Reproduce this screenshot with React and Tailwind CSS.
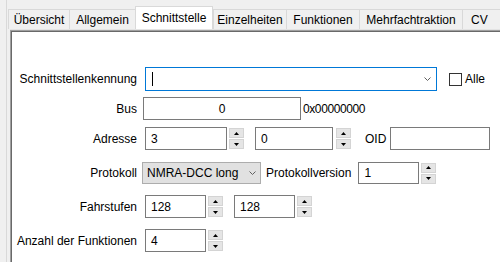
import React from "react";

const font = { fontFamily: '"Liberation Sans", Arial, sans-serif' };

function Chevron() {
  return (
    <svg width="7" height="4" viewBox="0 0 7 4" className="block">
      <polyline points="0.5,0.5 3.5,3.5 6.5,0.5" fill="none" stroke="#606060" strokeWidth="1" />
    </svg>
  );
}

function Spin({ ml = "ml-[2px]" }) {
  return (
    <div className={`flex flex-col gap-[1px] w-[15px] ${ml} shrink-0`}>
      <div className="h-[10px] bg-[#e5e5e5] border border-[#d4d4d4] flex items-center justify-center">
        <svg width="5" height="3" viewBox="0 0 5 3" className="block">
          <polygon points="0,3 5,3 2.5,0" fill="#000" />
        </svg>
      </div>
      <div className="h-[10px] bg-[#e5e5e5] border border-[#d4d4d4] flex items-center justify-center">
        <svg width="5" height="3" viewBox="0 0 5 3" className="block">
          <polygon points="0,0 5,0 2.5,3" fill="#000" />
        </svg>
      </div>
    </div>
  );
}

function Tab({ label, w, selected }) {
  if (selected) {
    return (
      <div className={`${w} shrink-0 h-[23px] bg-white border border-b-0 border-[#d9d9d9] flex items-center justify-center text-[12px] text-black whitespace-nowrap`}>
        {label}
      </div>
    );
  }
  return (
    <div className={`${w} shrink-0 h-[20px] mt-[3px] bg-[#f0f0f0] border border-b-0 border-r-0 border-[#d9d9d9] flex items-center justify-center text-[12px] text-black whitespace-nowrap`}>
      {label}
    </div>
  );
}

export default function App() {
  return (
    <div className="w-[500px] h-[262px] bg-[#f0f0f0] overflow-hidden text-black whitespace-nowrap" style={font}>
      <div className="ml-[6px] h-full border-l border-[#d9d9d9] flex flex-col">
        <div className="h-[29px] pt-[6px] pl-[1px] flex items-start">
          <Tab label="Übersicht" w="w-[61px]" />
          <Tab label="Allgemein" w="w-[66px]" />
          <Tab label="Schnittstelle" w="w-[78px]" selected />
          <Tab label="Einzelheiten" w="w-[73px]" />
          <Tab label="Funktionen" w="w-[73px]" />
          <Tab label="Mehrfachtraktion" w="w-[103px]" />
          <div className="w-[40px] shrink-0 h-[20px] mt-[3px] border border-b-0 border-r-0 border-[#d9d9d9] flex items-center pl-[8px] text-[12px]">CV</div>
        </div>
        <div className="h-[1px] bg-[#e3e3e3] ml-[3px]" />
        <div className="flex-1 ml-[3px] border-t border-l border-[#a0a0a0] bg-white">
          <div className="h-full border-t border-l border-[#696969] pt-[35px] text-[12px]">
            {/* Row 1 */}
            <div className="flex items-center h-[24px]">
              <div className="w-[125px] shrink-0 text-right">Schnittstellenkennung</div>
              <div className="ml-[8px] w-[292px] shrink-0 h-[24px] border border-[#0078d7] bg-white flex items-center pl-[6px] pr-[5px]">
                <div className="w-[1px] h-[14px] bg-black" />
                <div className="flex-1" />
                <Chevron />
              </div>
              <div className="ml-[12px] w-[13px] h-[13px] shrink-0 border border-[#333333] bg-white" />
              <div className="ml-[3px]">Alle</div>
            </div>
            {/* Row 2 */}
            <div className="flex items-center h-[23px] mt-[6px]">
              <div className="w-[125px] shrink-0 text-right">Bus</div>
              <div className="ml-[6px] w-[158px] shrink-0 h-[23px] border border-[#7a7a7a] bg-white flex items-center justify-center">0</div>
              <div className="ml-[2px] tracking-[-0.4px]">0x00000000</div>
            </div>
            {/* Row 3 */}
            <div className="flex items-center h-[23px] mt-[7px]">
              <div className="w-[125px] shrink-0 text-right">Adresse</div>
              <div className="ml-[8px] w-[82px] shrink-0 h-[23px] border border-[#7a7a7a] bg-white flex items-center pl-[5px]">3</div>
              <Spin />
              <div className="ml-[11px] w-[78px] shrink-0 h-[23px] border border-[#7a7a7a] bg-white flex items-center pl-[5px]">0</div>
              <Spin ml="ml-[3px]" />
              <div className="ml-[14px]">OID</div>
              <div className="ml-[4px] w-[100px] shrink-0 h-[23px] border border-[#7a7a7a] bg-white" />
            </div>
            {/* Row 4 */}
            <div className="flex items-center h-[22px] mt-[12px]">
              <div className="w-[125px] shrink-0 text-right">Protokoll</div>
              <div className="ml-[5px] w-[119px] shrink-0 h-[22px] border border-[#adadad] bg-[#e1e1e1] flex items-center pl-[4px] pr-[4px]">
                <span className="flex-1">NMRA-DCC long</span>
                <Chevron />
              </div>
              <div className="ml-[5px]">Protokollversion</div>
              <div className="ml-[7px] w-[61px] shrink-0 h-[22px] border border-[#7a7a7a] bg-white flex items-center pl-[5px]">1</div>
              <Spin />
            </div>
            {/* Row 5 */}
            <div className="flex items-center h-[23px] mt-[11px]">
              <div className="w-[125px] shrink-0 text-right">Fahrstufen</div>
              <div className="ml-[8px] w-[61px] shrink-0 h-[23px] border border-[#7a7a7a] bg-white flex items-center pl-[5px]">128</div>
              <Spin />
              <div className="ml-[11px] w-[61px] shrink-0 h-[23px] border border-[#7a7a7a] bg-white flex items-center pl-[5px]">128</div>
              <Spin />
            </div>
            {/* Row 6 */}
            <div className="flex items-center h-[23px] mt-[11px]">
              <div className="w-[125px] shrink-0 text-right">Anzahl der Funktionen</div>
              <div className="ml-[8px] w-[61px] shrink-0 h-[23px] border border-[#7a7a7a] bg-white flex items-center pl-[5px]">4</div>
              <Spin />
            </div>
          </div>
        </div>
      </div>
    </div>
  );
}
